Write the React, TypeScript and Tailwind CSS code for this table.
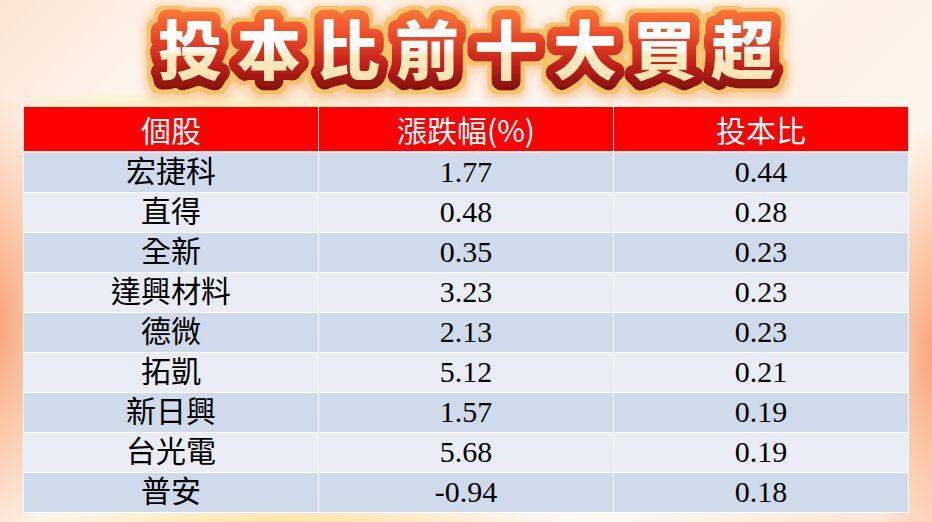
const rows = [
  { name: "宏捷科", change: "1.77", ratio: "0.44" },
  { name: "直得", change: "0.48", ratio: "0.28" },
  { name: "全新", change: "0.35", ratio: "0.23" },
  { name: "達興材料", change: "3.23", ratio: "0.23" },
  { name: "德微", change: "2.13", ratio: "0.23" },
  { name: "拓凱", change: "5.12", ratio: "0.21" },
  { name: "新日興", change: "1.57", ratio: "0.19" },
  { name: "台光電", change: "5.68", ratio: "0.19" },
  { name: "普安", change: "-0.94", ratio: "0.18" },
];

const headers = ["個股", "漲跌幅(%)", "投本比"];

// title drawn as one svg text; rim and shadow come from the filter
const Title = () => (
  <svg width="932" height="107" viewBox="0 0 932 107" className="shrink-0 block">
    <defs>
      <linearGradient id="outline" x1="0" y1="0" x2="0" y2="1">
        <stop offset="0%" stopColor="#ff8a3a" />
        <stop offset="35%" stopColor="#f0502a" />
        <stop offset="70%" stopColor="#c4201a" />
        <stop offset="100%" stopColor="#7e0e0a" />
      </linearGradient>
      <linearGradient id="face" x1="0" y1="0" x2="0" y2="1">
        <stop offset="0%" stopColor="#ffffff" />
        <stop offset="52%" stopColor="#ffffff" />
        <stop offset="60%" stopColor="#fdebc4" />
        <stop offset="100%" stopColor="#fce0a8" />
      </linearGradient>
      <filter id="rim" x="-10%" y="-40%" width="120%" height="180%">
        <feMorphology in="SourceAlpha" operator="dilate" radius="4" result="fat" />
        <feFlood floodColor="#f5c46a" />
        <feComposite in2="fat" operator="in" result="gold" />
        <feMorphology in="SourceAlpha" operator="dilate" radius="7" result="fatter" />
        <feGaussianBlur in="fatter" stdDeviation="4" result="blur" />
        <feOffset in="blur" dy="3" result="shadow" />
        <feFlood floodColor="#f2a35c" floodOpacity="0.45" />
        <feComposite in2="shadow" operator="in" result="glow" />
        <feMerge>
          <feMergeNode in="glow" />
          <feMergeNode in="gold" />
          <feMergeNode in="SourceGraphic" />
        </feMerge>
      </filter>
    </defs>
    <text
      x="474"
      y="74"
      textAnchor="middle"
      fontSize="64"
      fontWeight="900"
      letterSpacing="15"
      fontFamily='"Noto Sans CJK TC", "Noto Sans CJK SC", sans-serif'
      fill="url(#face)"
      stroke="url(#outline)"
      strokeWidth="19"
      strokeLinejoin="round"
      paintOrder="stroke"
      filter="url(#rim)"
    >
      投本比前十大買超
    </text>
  </svg>
);

export default function App() {
  return (
    <div className="w-[932px] h-[522px] overflow-hidden flex flex-col bg-[radial-gradient(ellipse_70px_230px_at_0%_62%,#f8a47e_0%,#fbc7a8_45%,transparent_100%),radial-gradient(ellipse_70px_230px_at_100%_68%,#f8a47e_0%,#fbc7a8_45%,transparent_100%),radial-gradient(ellipse_260px_30px_at_30%_100%,#fde3a6_0%,transparent_100%),radial-gradient(ellipse_220px_14px_at_22%_20%,#fdeeb8_0%,transparent_100%),linear-gradient(135deg,#fbe4d2_0%,#fff8f2_18%,#fdf0e6_30%,#fff9f3_45%,#fdf1e6_60%,#fff7ef_78%,#fbe2cf_100%)]">
      <Title />
      <div className="mx-[23px]">
        <table className="w-[886px] table-fixed border-collapse font-['Liberation_Serif','Noto_Sans_CJK_TC',serif]">
          <thead>
            <tr>
              {headers.map((h) => (
                <th
                  key={h}
                  className="h-[45px] bg-[#fe0000] text-white text-[30px] font-normal leading-none border-x border-b-2 border-[#f4e6e6] font-['Noto_Sans_CJK_TC',sans-serif]"
                >
                  {h}
                </th>
              ))}
            </tr>
          </thead>
          <tbody>
            {rows.map((r, i) => (
              <tr key={r.name} className={i % 2 === 0 ? "bg-[#cfdaeb]" : "bg-[#e8edf6]"}>
                <td className="h-[40px] border border-white text-center text-[30px] leading-none text-black">
                  {r.name}
                </td>
                <td className="h-[40px] border border-white text-center text-[30px] leading-none text-black">
                  {r.change}
                </td>
                <td className="h-[40px] border border-white text-center text-[30px] leading-none text-black">
                  {r.ratio}
                </td>
              </tr>
            ))}
          </tbody>
        </table>
      </div>
    </div>
  );
}
